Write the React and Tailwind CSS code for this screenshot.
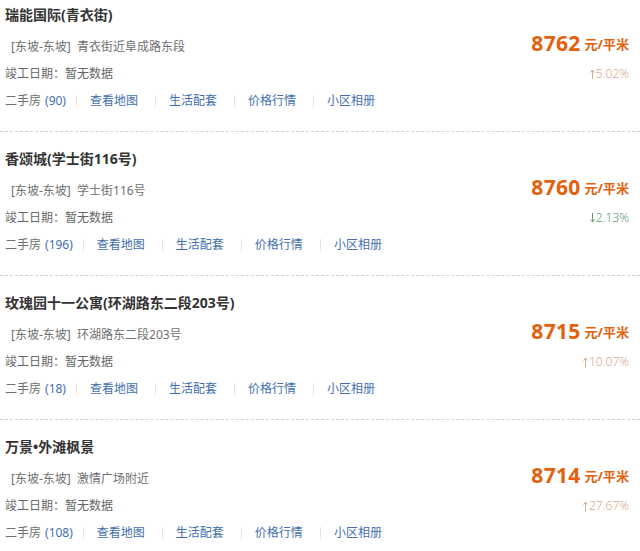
import React from "react";

const items = [
  { name: "瑞能国际(青衣街)", addr: "青衣街近阜成路东段", price: "8762", dir: "up", pct: "5.02%", count: "90" },
  { name: "香颂城(学士街116号)", addr: "学士街116号", price: "8760", dir: "down", pct: "2.13%", count: "196" },
  { name: "玫瑰园十一公寓(环湖路东二段203号)", addr: "环湖路东二段203号", price: "8715", dir: "up", pct: "10.07%", count: "18" },
  { name: "万景•外滩枫景", addr: "激情广场附近", price: "8714", dir: "up", pct: "27.67%", count: "108" },
];

function Arrow({ dir }) {
  return (
    <svg width="5" height="10" viewBox="0 0 5 10" className="inline-block mr-[1px]">
      {dir === "up" ? (
        <g fill="none" stroke="currentColor" strokeWidth="1">
          <line x1="2.5" y1="1" x2="2.5" y2="10" />
          <polyline points="0.5,3.5 2.5,1 4.5,3.5" />
        </g>
      ) : (
        <g fill="none" stroke="currentColor" strokeWidth="1">
          <line x1="2.5" y1="0" x2="2.5" y2="9" />
          <polyline points="0.5,6.5 2.5,9 4.5,6.5" />
        </g>
      )}
    </svg>
  );
}

function Sep({ first }) {
  return (
    <span
      className={
        first
          ? "inline-block w-px h-[12px] bg-[#e3e3e3] ml-[10px] mr-[13px]"
          : "inline-block w-px h-[12px] bg-[#e3e3e3] ml-[17px] mr-[13px]"
      }
    />
  );
}

function Item({ it }) {
  return (
    <div className="flex justify-between border-b border-dashed border-[#d2d2d2] pb-[20px]">
      <div className="flex flex-col pl-[5px] pt-[17px]">
        <div className="h-5 leading-5 text-[14px] font-bold text-[#333] whitespace-nowrap">{it.name}</div>
        <div className="h-5 leading-5 mt-[12px] text-[12px] text-[#707070] pl-[6px] whitespace-nowrap">
          [东坡-东坡]&nbsp;&nbsp;{it.addr}
        </div>
        <div className="h-5 leading-5 mt-[7px] text-[12px] text-[#666]">竣工日期：暂无数据</div>
        <div className="h-5 mt-[7px] flex items-center text-[12px] whitespace-nowrap">
          <span className="text-[#707070]">二手房</span>
          <span className="text-[#3f6fae] ml-[4px]">({it.count})</span>
          <Sep first />
          <span className="text-[#3f6fae]">查看地图</span>
          <Sep />
          <span className="text-[#3f6fae]">生活配套</span>
          <Sep />
          <span className="text-[#3f6fae]">价格行情</span>
          <Sep />
          <span className="text-[#3f6fae]">小区相册</span>
        </div>
      </div>
      <div className="flex flex-col items-end pr-[11px] pt-[41px]">
        <div className="h-[28px] flex items-center text-[#e3600f] font-bold whitespace-nowrap">
          <span className="text-[21px] leading-[28px] tracking-[0.3px]">{it.price}</span>
          <span className="text-[13px] ml-[4px] mt-[4px]">元/平米</span>
        </div>
        <div
          className={
            it.dir === "up"
              ? "h-5 mt-[7px] flex items-center text-[12px] text-[#d8a888] font-light"
              : "h-5 mt-[7px] flex items-center text-[12px] text-[#5e9c72] font-light"
          }
        >
          <Arrow dir={it.dir} />
          <span>{it.pct}</span>
        </div>
      </div>
    </div>
  );
}

export default function App() {
  return (
    <div
      className="w-[640px] h-[551px] overflow-hidden bg-white"
      style={{ fontFamily: '"Noto Sans", "Noto Sans CJK SC", sans-serif' }}
    >
      <div className="-mt-[12px]">
        {items.map((it) => (
          <Item key={it.name} it={it} />
        ))}
      </div>
    </div>
  );
}
